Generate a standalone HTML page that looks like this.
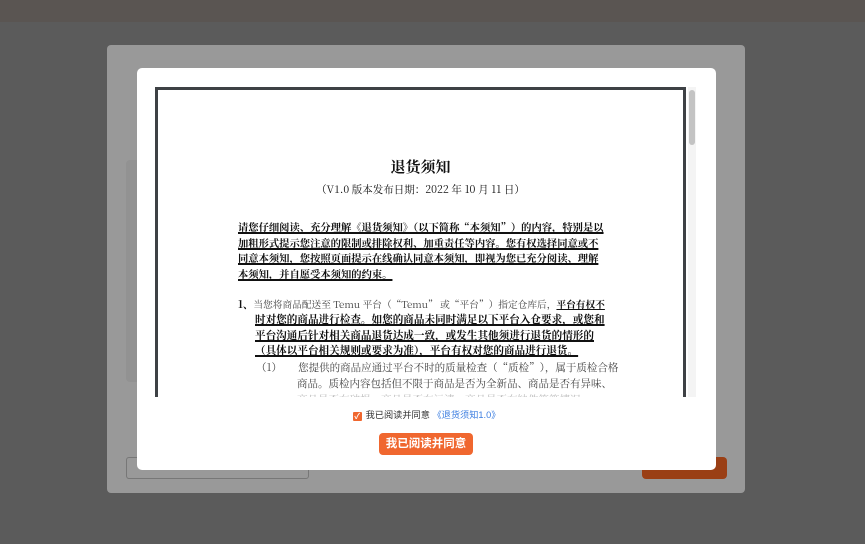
<!DOCTYPE html>
<html><head><meta charset="utf-8"><style>
*{margin:0;padding:0;box-sizing:border-box}
body{width:865px;height:544px;background:#5b5b5b;position:relative;overflow:hidden;font-family:"Liberation Sans","Noto Sans CJK SC",sans-serif}
.top{position:absolute;left:0;top:0;width:865px;height:22px;background:#5a5552}
.panel{position:absolute;left:107px;top:45px;width:638px;height:448px;background:#999;border-radius:4px}
.inner{position:absolute;left:126px;top:160px;width:20px;height:222px;background:#929292;border-radius:4px}
.bl{position:absolute;left:126px;top:457px;width:183px;height:22px;border:1px solid #777;border-radius:3px}
.br{position:absolute;left:642px;top:457px;width:85px;height:22px;background:#9a3f15;border-radius:4px}
.modal{position:absolute;left:137px;top:68px;width:579px;height:402px;background:#fff;border-radius:5px;overflow:hidden}
.doc{position:absolute;left:18px;top:19px;width:531px;height:310px;border:3px solid #3e4145;border-bottom:none;background:#fff;overflow:hidden;font-family:"Noto Serif CJK SC","Liberation Serif",serif;color:#111}
.sb{position:absolute;left:551px;top:19px;width:8px;height:310px;background:#f4f4f4}
.sb i{position:absolute;left:1px;top:3px;width:6px;height:55px;background:#c3c3c3;border-radius:3px}
.t{position:absolute;left:0;width:100%;text-align:center}
.p{position:absolute;left:80px;width:370px;font-size:10.3px;font-weight:bold;line-height:15.7px;text-decoration:underline;text-decoration-thickness:1.5px;white-space:nowrap}
.cb{position:absolute;left:0;width:100%;top:339px;text-align:center;font-size:9.2px;color:#333}
.cb b{display:inline-block;width:9px;height:9px;background:#f0672f;border-radius:1px;vertical-align:-1px;margin-right:4px;color:#fff;font-size:8px;line-height:9px}
.btn{position:absolute;left:242px;top:365px;width:94px;height:22px;background:#f0672f;border-radius:4px;color:#fff;font-size:11.5px;font-weight:bold;text-align:center;line-height:22px}
</style></head><body>
<div class="top"></div>
<div class="panel"></div>
<div class="inner"></div>
<div class="bl"></div>
<div class="br"></div>
<div class="modal">
<div class="doc">
<div class="t" style="top:66px;font-size:15px;font-weight:bold">退货须知</div>
<div class="t" style="top:92px;font-size:10.5px">（V1.0 版本发布日期：2022 年 10 月 11 日）</div>
<div class="p" style="top:129px">请您仔细阅读、充分理解《退货须知》（以下简称“本须知”）的内容，特别是以<br>加粗形式提示您注意的限制或排除权利、加重责任等内容。您有权选择同意或不<br>同意本须知，您按照页面提示在线确认同意本须知，即视为您已充分阅读、理解<br>本须知，并自愿受本须知的约束。</div>
<div style="position:absolute;left:80px;top:206px;font-size:9.7px;line-height:16.3px;white-space:nowrap"><b style="font-size:10.5px">1、</b><span style="color:#444">当您将商品配送至 Temu 平台（“Temu” 或“平台”）指定仓库后，</span><b style="text-decoration:underline">平台有权不</b></div>
<div class="p" style="top:222px;left:97px;width:350px;font-size:10.6px">时对您的商品进行检查。如您的商品未同时满足以下平台入仓要求，或您和<br>平台沟通后针对相关商品退货达成一致，或发生其他须进行退货的情形的<br>（具体以平台相关规则或要求为准），平台有权对您的商品进行退货。</div>
<div style="position:absolute;left:98px;top:270px;font-size:10.5px;line-height:16px;color:#444;white-space:nowrap">（1）&nbsp;&nbsp;&nbsp;&nbsp;&nbsp;&nbsp;您提供的商品应通过平台不时的质量检查（“质检”），属于质检合格<br><span style="padding-left:41px">商品。质检内容包括但不限于商品是否为全新品、商品是否有异味、</span><br><span style="padding-left:41px;color:#bbb">商品是否有破损、商品是否有污渍、商品是否有缺件等等情况。</span></div>
</div>
<div class="sb"><i></i></div>
<div class="cb"><b>✓</b>我已阅读并同意 <span style="color:#3b7de0">《退货须知1.0》</span></div>
<div class="btn">我已阅读并同意</div>
</div>
</body></html>
